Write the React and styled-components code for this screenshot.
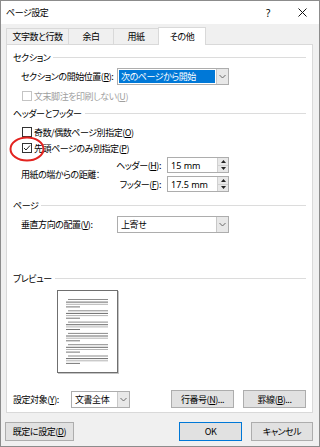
import React from "react";
import styled, { createGlobalStyle } from "styled-components";

const Global = createGlobalStyle`
  html, body { margin: 0; padding: 0; background: #fff; }
  body {
    font-family: "Noto Sans CJK JP", "Noto Sans", sans-serif;
    font-size: 9px;
    letter-spacing: -0.45px;
    color: #000;
    font-feature-settings: "palt";
  }
  * { box-sizing: border-box; }
`;

const Window = styled.div`
  width: 320px;
  height: 447px;
  border: 1px solid #8c8c8c;
  background: #f0f0f0;
  display: flex;
  flex-direction: column;
  overflow: hidden;
`;

const TitleBar = styled.div`
  height: 23px;
  background: #fff;
  display: flex;
  align-items: center;
  flex-shrink: 0;
`;

const Title = styled.div`
  flex: 1;
  padding-left: 5px;
  font-size: 9px;
`;

const TitleBtn = styled.div`
  width: 34px;
  height: 23px;
  display: flex;
  align-items: center;
  justify-content: center;
  font-family: "Noto Sans", sans-serif;
  font-size: 10px;
`;

const Body = styled.div`
  padding: 3px 6px 0 5px;
  display: flex;
  flex-direction: column;
`;

const TabRow = styled.div`
  display: flex;
  align-items: flex-end;
  height: 17px;
`;

const Tab = styled.div`
  width: ${(p) => p.$w}px;
  height: ${(p) => (p.$active ? 18 : 16)}px;
  margin-bottom: ${(p) => (p.$active ? -1 : 0)}px;
  margin-left: ${(p) => (p.$first ? 0 : -1)}px;
  border: 1px solid #d9d9d9;
  border-bottom: none;
  background: ${(p) => (p.$active ? "#fff" : "#f0f0f0")};
  position: relative;
  z-index: ${(p) => (p.$active ? 1 : 0)};
  display: flex;
  align-items: center;
  justify-content: center;
  white-space: nowrap;
`;

const Panel = styled.div`
  height: 369px;
  border: 1px solid #d9d9d9;
  background: #fff;
  padding: 0 6px;
  display: flex;
  flex-direction: column;
  position: relative;
`;

const SectionHeader = styled.div`
  display: flex;
  align-items: center;
  gap: 3px;
  height: 12px;
  margin-top: ${(p) => p.$mt}px;
  white-space: nowrap;
  &::after {
    content: "";
    flex: 1;
    height: 1px;
    background: #dcdcdc;
  }
`;

const Row = styled.div`
  display: flex;
  align-items: center;
  height: ${(p) => p.$h || 12}px;
  margin-top: ${(p) => p.$mt || 0}px;
  padding-left: ${(p) => (p.$indent ? 8 : 0)}px;
`;

const Label = styled.span`
  width: ${(p) => (p.$w ? `${p.$w}px` : "auto")};
  flex-shrink: 0;
  white-space: nowrap;
  color: ${(p) => (p.$disabled ? "#a0a0a0" : "#000")};
`;

const U = styled.span`
  text-decoration: underline;
  text-underline-offset: 1px;
`;

const Box = styled.span`
  width: 10px;
  height: 10px;
  margin-left: 1px;
  margin-right: 2px;
  border: 1px solid ${(p) => (p.$disabled ? "#c4c4c4" : "#333")};
  background: #fff;
  display: inline-flex;
  align-items: center;
  justify-content: center;
  flex-shrink: 0;
`;

const Combo = styled.div`
  width: ${(p) => p.$w}px;
  height: 17px;
  border: 1px solid #adadad;
  background: #fff;
  display: flex;
  padding: 1px 0 1px 1px;
  flex-shrink: 0;
`;

const ComboText = styled.div`
  flex: 1;
  display: flex;
  align-items: center;
  padding-left: 2px;
  white-space: nowrap;
  background: ${(p) => (p.$sel ? "#0078d7" : "transparent")};
  color: ${(p) => (p.$sel ? "#fff" : "#000")};
`;

const ComboBtn = styled.div`
  width: 12px;
  margin: -1px 0 -1px 1px;
  border-left: 1px solid #c8c8c8;
  background: #e8e8e8;
  display: flex;
  align-items: center;
  justify-content: center;
`;

const DistGroup = styled.div`
  display: flex;
  align-items: center;
  padding-left: 8px;
  margin-top: 3px;
`;

const SpinGrid = styled.div`
  display: grid;
  grid-template-columns: 46px 62px;
  column-gap: 6px;
  row-gap: 3px;
  align-items: center;
`;

const SubLabel = styled.span`
  text-align: right;
  white-space: nowrap;
`;

const Spin = styled.div`
  height: 16px;
  border: 1px solid #adadad;
  background: #fff;
  display: flex;
`;

const SpinText = styled.div`
  flex: 1;
  padding-left: 3px;
  display: flex;
  align-items: center;
  font-family: "Noto Sans", sans-serif;
  font-size: 9px;
  letter-spacing: 0;
`;

const SpinBtns = styled.div`
  width: 11px;
  display: flex;
  flex-direction: column;
  border-left: 1px solid #d0d0d0;
`;

const SpinHalf = styled.div`
  flex: 1;
  background: #e8e8e8;
  display: flex;
  align-items: center;
  justify-content: center;
  & + & {
    border-top: 1px solid #d0d0d0;
  }
`;

const PreviewPage = styled.div`
  width: 61px;
  height: 83px;
  margin-top: 6px;
  margin-left: 44px;
  border: 1px solid #6f6f6f;
  box-shadow: 1px 1px 0 #c4c4c4;
  background: #fff;
  display: flex;
`;

const BottomRow = styled.div`
  display: flex;
  align-items: center;
  height: 18px;
  margin-top: 17px;
`;

const BtnGroup = styled.div`
  margin-left: auto;
  display: flex;
  gap: 9px;
`;

const Button = styled.div`
  width: ${(p) => p.$w}px;
  height: ${(p) => p.$h || 18}px;
  background: #e1e1e1;
  border: 1px solid ${(p) => (p.$primary ? "#0078d7" : "#adadad")};
  display: flex;
  align-items: center;
  justify-content: center;
  white-space: nowrap;
`;

const Footer = styled.div`
  display: flex;
  padding: 9px 6px 0 4px;
  gap: 9px;
`;

const Spacer = styled.div`
  flex: 1;
`;

const RedCircle = styled.svg`
  position: absolute;
  left: 2px;
  top: 91px;
  pointer-events: none;
`;

const Chevron = () => (
  <svg width="7" height="5" viewBox="0 0 7 5">
    <path d="M0.5 1 L3.5 4 L6.5 1" fill="none" stroke="#6a6a6a" strokeWidth="1" />
  </svg>
);

const Tri = ({ up }) => (
  <svg width="5" height="3" viewBox="0 0 5 3">
    <path d={up ? "M0 3 L2.5 0 L5 3 Z" : "M0 0 L2.5 3 L5 0 Z"} fill="#222" />
  </svg>
);

const Check = () => (
  <svg width="8" height="8" viewBox="0 0 8 8">
    <path d="M1 4 L3 6 L7 1.5" fill="none" stroke="#222" strokeWidth="1" />
  </svg>
);

const PageLines = () => {
  const paras = [0, 1, 2, 3, 4, 5];
  const lineDefs = [
    { dy: 0, x1: 11, x2: 51, c: "#8c8c8c" },
    { dy: 2.6, x1: 9, x2: 51, c: "#6a6a6a" },
    { dy: 4.8, x1: 9, x2: 51, c: "#b4b4b4" },
    { dy: 7.4, x1: 9, x2: 23, c: "#777" },
  ];
  return (
    <svg width="59" height="81" viewBox="0 0 59 81">
      {paras.map((p) =>
        lineDefs.map((l, i) => (
          <rect
            key={`${p}-${i}`}
            x={l.x1 - 1}
            y={8 + p * 11.3 + l.dy}
            width={l.x2 - l.x1}
            height="1"
            fill={l.c}
          />
        ))
      )}
    </svg>
  );
};

export default function App() {
  return (
    <>
      <Global />
      <Window>
        <TitleBar>
          <Title>ページ設定</Title>
          <TitleBtn>?</TitleBtn>
          <TitleBtn>
            <svg width="9" height="9" viewBox="0 0 9 9">
              <path d="M0.5 0.5 L8.5 8.5 M8.5 0.5 L0.5 8.5" stroke="#111" strokeWidth="1" />
            </svg>
          </TitleBtn>
        </TitleBar>
        <Body>
          <TabRow>
            <Tab $first $w={63}>文字数と行数</Tab>
            <Tab $w={46}>余白</Tab>
            <Tab $w={46}>用紙</Tab>
            <Tab $w={48} $active>その他</Tab>
          </TabRow>
          <Panel>
            <SectionHeader $mt={6}>セクション</SectionHeader>
            <Row $indent $h={17} $mt={5}>
              <Label $w={96}>
                セクションの開始位置(<U>R</U>):
              </Label>
              <Combo $w={112}>
                <ComboText $sel>次のページから開始</ComboText>
                <ComboBtn>
                  <Chevron />
                </ComboBtn>
              </Combo>
            </Row>
            <Row $indent $mt={5}>
              <Box $disabled />
              <Label $disabled>
                文末脚注を印刷しない(<U>U</U>)
              </Label>
            </Row>
            <SectionHeader $mt={5}>ヘッダーとフッター</SectionHeader>
            <Row $indent $mt={7}>
              <Box />
              <Label>
                奇数/偶数ページ別指定(<U>O</U>)
              </Label>
            </Row>
            <Row $indent $mt={4}>
              <Box>
                <Check />
              </Box>
              <Label>
                先頭ページのみ別指定(<U>P</U>)
              </Label>
            </Row>
            <DistGroup>
              <Label $w={94}>用紙の端からの距離：</Label>
              <SpinGrid>
                <SubLabel>
                  ヘッダー(<U>H</U>):
                </SubLabel>
                <Spin>
                  <SpinText>15 mm</SpinText>
                  <SpinBtns>
                    <SpinHalf>
                      <Tri up />
                    </SpinHalf>
                    <SpinHalf>
                      <Tri />
                    </SpinHalf>
                  </SpinBtns>
                </Spin>
                <SubLabel>
                  フッター(<U>F</U>):
                </SubLabel>
                <Spin>
                  <SpinText>17.5 mm</SpinText>
                  <SpinBtns>
                    <SpinHalf>
                      <Tri up />
                    </SpinHalf>
                    <SpinHalf>
                      <Tri />
                    </SpinHalf>
                  </SpinBtns>
                </Spin>
              </SpinGrid>
            </DistGroup>
            <SectionHeader $mt={7}>ページ</SectionHeader>
            <Row $indent $h={17} $mt={5}>
              <Label $w={96}>
                垂直方向の配置(<U>V</U>):
              </Label>
              <Combo $w={112}>
                <ComboText>上寄せ</ComboText>
                <ComboBtn>
                  <Chevron />
                </ComboBtn>
              </Combo>
            </Row>
            <SectionHeader $mt={39}>プレビュー</SectionHeader>
            <PreviewPage>
              <PageLines />
            </PreviewPage>
            <BottomRow>
              <Label $w={58}>
                設定対象(<U>Y</U>):
              </Label>
              <Combo $w={59}>
                <ComboText>文書全体</ComboText>
                <ComboBtn>
                  <Chevron />
                </ComboBtn>
              </Combo>
              <BtnGroup>
                <Button $w={63}>
                  行番号(<U>N</U>)...
                </Button>
                <Button $w={63}>
                  罫線(<U>B</U>)...
                </Button>
              </BtnGroup>
            </BottomRow>
            <RedCircle width="36" height="26" viewBox="0 0 36 26">
              <ellipse cx="18" cy="13" rx="16.5" ry="11.5" fill="none" stroke="#e3231f" strokeWidth="2" />
            </RedCircle>
          </Panel>
        </Body>
        <Footer>
          <Button $w={69} $h={19}>
            既定に設定(<U>D</U>)
          </Button>
          <Spacer />
          <Button $w={63} $h={19} $primary>
            OK
          </Button>
          <Button $w={62} $h={19}>
            キャンセル
          </Button>
        </Footer>
      </Window>
    </>
  );
}
